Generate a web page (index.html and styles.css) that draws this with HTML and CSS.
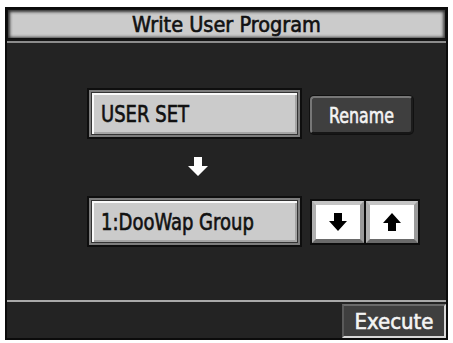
FILE: index.html
```
<!DOCTYPE html>
<html lang="en">
<head>
  <meta charset="UTF-8">
  <title>Write User Program</title>
  <link rel="stylesheet" href="styles.css">
</head>
<body>
  <div class="screen">
    <div class="titlebar">Write User Program</div>

    <div class="main">
      <div class="row">
        <div class="field"><span class="narrow">USER SET</span></div>
        <button class="btn-dark rename"><span class="narrow">Rename</span></button>
      </div>

      <div class="arrow-row">
        <svg width="20" height="19" viewBox="0 0 20 19">
          <path d="M6 0h8v9h6l-10 10-10-10h6z" fill="#fff"/>
        </svg>
      </div>

      <div class="row">
        <div class="field"><span class="narrow">1:DooWap Group</span></div>
        <div class="steps">
          <button class="btn-step">
            <svg width="18" height="18" viewBox="0 0 18 18"><path d="M5 0h8v8h5l-9 10-9-10h5z" fill="#000"/></svg>
          </button>
          <button class="btn-step">
            <svg width="18" height="18" viewBox="0 0 18 18"><path d="M5 18h8v-8h5l-9-10-9 10h5z" fill="#000"/></svg>
          </button>
        </div>
      </div>
    </div>

    <div class="footer">
      <button class="btn-dark execute">Execute</button>
    </div>
  </div>
</body>
</html>
```

FILE: styles.css
```
* {
  box-sizing: border-box;
}

body {
  margin: 0;
  background: #fff;
  font-family: 'DejaVu Sans Condensed', 'DejaVu Sans', sans-serif;
  -webkit-text-stroke: 0.6px currentColor;
}

.screen {
  margin: 7px 0 0 5px;
  width: 443px;
  height: 333px;
  background: #232323;
  border: 2px solid #0b0b0b;
  display: flex;
  flex-direction: column;
}

.titlebar {
  height: 32px;
  background: #cbcbcb;
  box-shadow: inset 0 0 0 1px #111, inset 3px 3px 3px #333, inset -3px -2px 3px #444;
  text-align: center;
  font-size: 21.5px;
  line-height: 32px;
  color: #111;
  border-bottom: 2px solid #151515;
  position: relative;
}

.titlebar::after {
  content: "";
  position: absolute;
  left: 0;
  right: 0;
  bottom: -4px;
  height: 2px;
  background: #8c8c8c;
}

.narrow {
  display: inline-block;
  transform: scaleX(0.87);
  transform-origin: left center;
  white-space: nowrap;
}

.main {
  flex: 1;
  padding: 47px 0 0 80px;
}

.row {
  display: flex;
  align-items: center;
  gap: 8px;
}

.field {
  width: 215px;
  height: 51px;
  background: #cbcbcb;
  border: 2px solid #0e0e0e;
  box-shadow: inset 0 0 0 2px #7d7d7d, inset 0 0 0 3px #333, inset 5px 5px 0 #fafafa, inset -5px -5px 0 #a5a5a5;
  padding-left: 12px;
  display: flex;
  align-items: center;
  font-size: 23px;
  color: #111;
}

.btn-dark {
  background: #3f3f3f;
  color: #f4f4f4;
  font-family: inherit;
  border: 2px solid #777;
  border-right-color: #1c1c1c;
  border-bottom-color: #161616;
  border-radius: 4px;
  padding: 0;
}

.rename {
  width: 103px;
  height: 38px;
  font-size: 22px;
  margin-top: 3px;
  box-shadow: 0 0 0 1px #111;
}

.rename .narrow {
  transform: scaleX(0.8);
  transform-origin: center;
}

.arrow-row {
  width: 222px;
  display: flex;
  justify-content: center;
  padding: 18px 0 20px;
}

.arrow-row svg {
  display: block;
}

.steps {
  display: flex;
  gap: 2px;
  margin-left: 2px;
}

.btn-step {
  width: 52px;
  height: 42px;
  padding: 0;
  background: #fff;
  border: 4px solid #9a9a9a;
  border-top-color: #c4c4c4;
  border-left-color: #b0b0b0;
  border-bottom-color: #6a6a6a;
  outline: 2px solid #0d0d0d;
  display: flex;
  align-items: center;
  justify-content: center;
}

.footer {
  height: 38px;
  border-top: 2px solid #a9a9a9;
  display: flex;
  justify-content: flex-end;
  align-items: flex-end;
}

.execute {
  width: 104px;
  height: 34px;
  font-size: 22px;
  border-radius: 0;
  border: 2px solid #d8d8d8;
  border-top-color: #6a6a6a;
  border-left-color: #5a5a5a;
}
```
